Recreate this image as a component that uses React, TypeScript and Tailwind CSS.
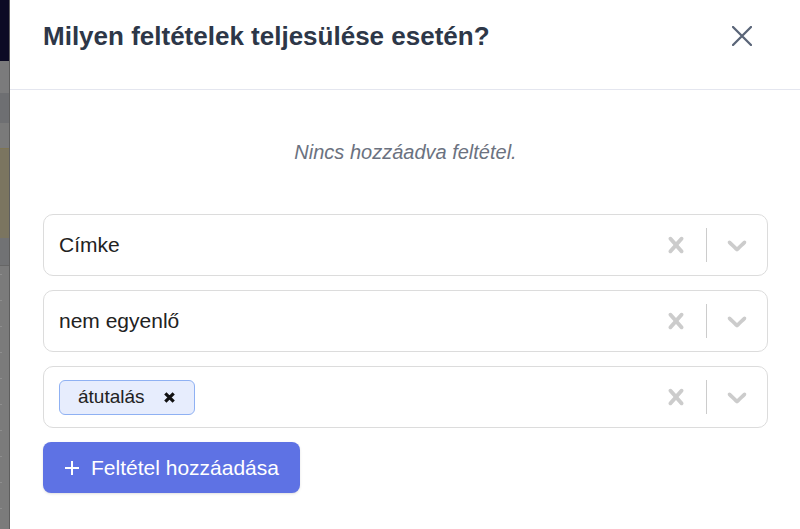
import React from 'react';

const font = { fontFamily: '"Liberation Sans", Arial, sans-serif' };

function Cross({ className }: { className?: string }) {
  return (
    <svg viewBox="0 0 20 20" className={className} fill="currentColor" aria-hidden="true">
      <path d="M14.348 14.849c-0.469 0.469-1.229 0.469-1.697 0l-2.651-3.030-2.651 3.029c-0.469 0.469-1.229 0.469-1.697 0-0.469-0.469-0.469-1.229 0-1.697l2.758-3.15-2.759-3.152c-0.469-0.469-0.469-1.228 0-1.697s1.228-0.469 1.697 0l2.652 3.031 2.651-3.031c0.469-0.469 1.228-0.469 1.697 0s0.469 1.229 0 1.697l-2.758 3.152 2.758 3.150c0.469 0.469 0.469 1.229 0 1.698z" />
    </svg>
  );
}

function Chevron({ className }: { className?: string }) {
  return (
    <svg viewBox="0 0 20 20" className={className} fill="currentColor" aria-hidden="true">
      <path d="M4.516 7.548c0.436-0.446 1.043-0.481 1.576 0l3.908 3.747 3.908-3.747c0.533-0.481 1.141-0.446 1.574 0 0.436 0.445 0.408 1.197 0 1.615-0.406 0.418-4.695 4.502-4.695 4.502-0.217 0.223-0.502 0.335-0.787 0.335s-0.57-0.112-0.789-0.335c0 0-4.287-4.084-4.695-4.502s-0.436-1.17 0-1.615z" />
    </svg>
  );
}

function SelectBox({ children }: { children: React.ReactNode }) {
  return (
    <div className="flex h-[62px] items-center rounded-[10px] border border-[#dcdcdc] bg-white">
      <div className="flex flex-1 items-center pl-[15px]">{children}</div>
      <div className="flex h-full items-stretch">
        <div className="flex w-[60px] items-center justify-center text-[#cccccc]">
          <Cross className="h-[32px] w-[32px]" />
        </div>
        <div className="my-[13px] w-px bg-[#cccccc]" />
        <div className="flex w-[60px] items-center justify-center text-[#cccccc]">
          <Chevron className="h-[32px] w-[32px]" />
        </div>
      </div>
    </div>
  );
}

export default function App() {
  return (
    <div className="flex h-[529px] w-[800px] overflow-hidden bg-white" style={font}>
      {/* dimmed page behind the modal */}
      <div className="flex w-[10px] flex-col border-r border-[#5e5e5e]">
        <div className="h-[61px] bg-[#0c0b24]" />
        <div className="h-[32px] bg-[#7b7b7c]" />
        <div className="h-[30px] bg-[#6e6f72]" />
        <div className="h-[25px] bg-[#7a7a7a]" />
        <div className="h-[90px] border-t border-[#7f7552] bg-[#7b7560]" />
        <div className="h-[28px] border-b border-[#666] bg-[#717274]" />
        <div className="flex flex-1 flex-col gap-[25px] bg-[#7b7b7b] pt-[8px]">
          {Array.from({ length: 10 }).map((_, i) => (
            <div key={i} className="h-px w-[2px] bg-[#8e8e8e]" />
          ))}
        </div>
      </div>

      <div className="flex flex-1 flex-col bg-white">
        <div className="flex items-center justify-between border-b border-[#e4e6ef] pb-[38px] pl-[33px] pr-[48px] pt-[21px]">
          <h2 className="text-[26px] font-bold leading-[30px] text-[#2d3748]">
            Milyen feltételek teljesülése esetén?
          </h2>
          <svg viewBox="0 0 20 20" className="h-[20px] w-[20px] text-[#5a6578]" fill="none" stroke="currentColor" strokeWidth="2.3" strokeLinecap="round">
            <path d="M1 1 19 19M19 1 1 19" />
          </svg>
        </div>

        <div className="flex flex-col pl-[33px] pr-[32px] pt-[51px]">
          <p className="mb-[50px] text-center text-[20px] italic leading-[23px] text-[#6b7280]">
            Nincs hozzáadva feltétel.
          </p>

          <div className="flex flex-col gap-[14px]">
            <SelectBox>
              <span className="text-[21px] text-[#222]">Címke</span>
            </SelectBox>
            <SelectBox>
              <span className="text-[21px] text-[#222]">nem egyenlő</span>
            </SelectBox>
            <SelectBox>
              <span className="flex h-[35px] items-center gap-[19px] rounded-[6px] border border-[#8fb1f3] bg-[#e7edfd] pl-[18px] pr-[19px] text-[19px] text-[#222]">
                átutalás
                <svg viewBox="0 0 10 10" className="h-[11px] w-[11px] text-[#111]" fill="none" stroke="currentColor" strokeWidth="2.9">
                  <path d="M1.2 1.2 8.8 8.8M8.8 1.2 1.2 8.8" />
                </svg>
              </span>
            </SelectBox>

            <button className="flex h-[51px] w-[257px] items-center justify-center gap-[11px] rounded-[8px] bg-[#5e72e4] text-[21px] text-white shadow-sm">
              <svg viewBox="0 0 16 16" className="h-[16px] w-[16px]" fill="none" stroke="currentColor" strokeWidth="2">
                <path d="M8 1v14M1 8h14" />
              </svg>
              Feltétel hozzáadása
            </button>
          </div>
        </div>
      </div>
    </div>
  );
}
